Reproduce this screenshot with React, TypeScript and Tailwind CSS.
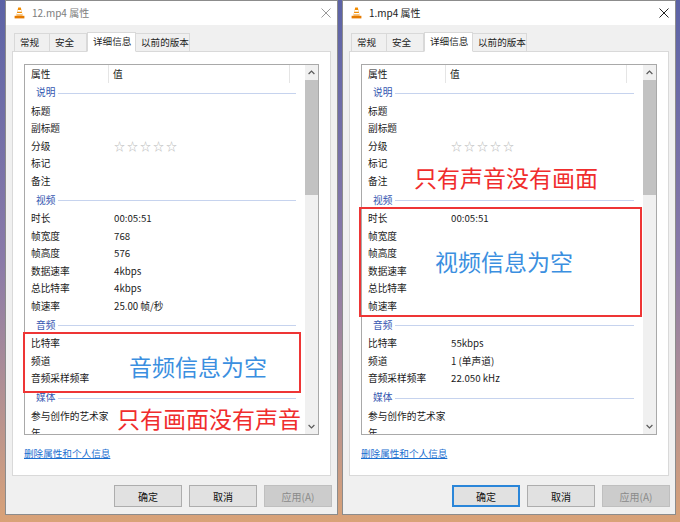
import React from 'react';

type Row = { label: string; value?: string; stars?: boolean };
type Group = { name: string; rows: Row[] };

const descGroup: Group = {
  name: '说明',
  rows: [
    { label: '标题' },
    { label: '副标题' },
    { label: '分级', stars: true },
    { label: '标记' },
    { label: '备注' },
  ],
};

const mediaGroup: Group = {
  name: '媒体',
  rows: [{ label: '参与创作的艺术家' }, { label: '年' }],
};

const leftGroups: Group[] = [
  descGroup,
  {
    name: '视频',
    rows: [
      { label: '时长', value: '00:05:51' },
      { label: '帧宽度', value: '768' },
      { label: '帧高度', value: '576' },
      { label: '数据速率', value: '4kbps' },
      { label: '总比特率', value: '4kbps' },
      { label: '帧速率', value: '25.00 帧/秒' },
    ],
  },
  {
    name: '音频',
    rows: [{ label: '比特率' }, { label: '频道' }, { label: '音频采样频率' }],
  },
  mediaGroup,
];

const rightGroups: Group[] = [
  descGroup,
  {
    name: '视频',
    rows: [
      { label: '时长', value: '00:05:51' },
      { label: '帧宽度' },
      { label: '帧高度' },
      { label: '数据速率' },
      { label: '总比特率' },
      { label: '帧速率' },
    ],
  },
  {
    name: '音频',
    rows: [
      { label: '比特率', value: '55kbps' },
      { label: '频道', value: '1 (单声道)' },
      { label: '音频采样频率', value: '22.050 kHz' },
    ],
  },
  mediaGroup,
];

function VlcIcon() {
  return (
    <svg width="11" height="12" viewBox="0 0 11 12">
      <path d="M4.2 0.6 L6.8 0.6 L8.6 8.6 L2.4 8.6 Z" fill="#f28c00" />
      <path d="M3.7 3 L7.3 3 L7.7 4.8 L3.3 4.8 Z" fill="#ffffff" />
      <path d="M3 6 L8 6 L8.3 7.4 L2.7 7.4 Z" fill="#ffffff" />
      <path d="M0.6 8.8 H10.4 L10.4 11.4 H0.6 Z" fill="#e57a00" />
    </svg>
  );
}

function CloseX({ color }: { color: string }) {
  return (
    <svg width="10" height="10" viewBox="0 0 10 10">
      <path d="M0.5 0.5 L9.5 9.5 M9.5 0.5 L0.5 9.5" stroke={color} strokeWidth="1" />
    </svg>
  );
}

function Chevron({ down }: { down?: boolean }) {
  return (
    <svg width="7" height="5" viewBox="0 0 7 5">
      <path
        d={down ? 'M0.6 1 L3.5 3.9 L6.4 1' : 'M0.6 4 L3.5 1.1 L6.4 4'}
        stroke="#5a5a5a"
        strokeWidth="1.2"
        fill="none"
      />
    </svg>
  );
}

function ListBox({ groups }: { groups: Group[] }) {
  return (
    <div className="h-[371px] border border-[#a9a9a9] bg-white flex overflow-hidden">
      <div className="flex-1 flex flex-col overflow-hidden text-[9.7px] text-[#1a1a1a]">
        <div className="h-[18px] flex shrink-0">
          <div className="w-[84px] pl-[6px] border-r border-[#e5e5e5] h-full flex items-center">属性</div>
          <div className="w-[181px] pl-[4px] border-r border-[#e5e5e5] h-full flex items-center">值</div>
        </div>
        {groups.map((g) => (
          <React.Fragment key={g.name}>
            <div className="h-[20px] shrink-0 flex items-center pl-[11px] pr-[9px] gap-[3px]">
              <span className="text-[#3456b0] leading-none">{g.name}</span>
              <div className="flex-1 h-px bg-[#c6d3ee]" />
            </div>
            {g.rows.map((r) => (
              <div key={r.label} className="h-[17.5px] shrink-0 flex items-center">
                <div className="w-[89px] pl-[6px] shrink-0 leading-none whitespace-nowrap">{r.label}</div>
                {r.stars ? (
                  <span className="text-[#b8b8b8] text-[11px] tracking-[2px] leading-none">☆☆☆☆☆</span>
                ) : (
                  <span className="leading-none whitespace-nowrap">{r.value ?? ''}</span>
                )}
              </div>
            ))}
          </React.Fragment>
        ))}
      </div>
      <div className="w-[13px] bg-[#f0f0f0] flex flex-col shrink-0">
        <div className="h-[15px] flex items-center justify-center">
          <Chevron />
        </div>
        <div className="h-[115px] bg-[#c2c2c2]" />
        <div className="flex-1" />
        <div className="h-[15px] flex items-center justify-center">
          <Chevron down />
        </div>
      </div>
    </div>
  );
}

const tabs = [
  { name: '常规', w: 'w-[36px]' },
  { name: '安全', w: 'w-[38px]' },
  { name: '详细信息', w: 'w-[49px]' },
  { name: '以前的版本', w: 'w-[55px]' },
];

function Dialog({
  title,
  active,
  groups,
  width,
  children,
}: {
  title: string;
  active: boolean;
  groups: Group[];
  width: string;
  children?: React.ReactNode;
}) {
  return (
    <div className={`${width} h-[515px] bg-[#f0f0f0] border border-[#8c8c8c] flex flex-col relative shrink-0`}>
      <div className="h-[24px] bg-white flex items-center pl-[8px] pr-[6px] shrink-0">
        <VlcIcon />
        <span
          className={`ml-[7px] text-[10px] leading-none ${active ? 'text-[#1a1a1a]' : 'text-[#7c7c7c]'}`}
        >
          {title}
        </span>
        <div className="flex-1" />
        <CloseX color={active ? '#222222' : '#9a9a9a'} />
      </div>
      <div className="h-[26px] pl-[8px] flex items-end shrink-0 relative z-10">
        {tabs.map((t) => {
          const sel = t.name === '详细信息';
          return (
            <div
              key={t.name}
              className={`${t.w} pl-[5px] flex items-center text-[9.6px] leading-none text-[#1e1e1e] border border-[#d9d9d9] ${
                sel ? 'h-[20px] bg-white border-b-white -mb-px' : 'h-[18px] bg-[#f0f0f0] border-b-0 -ml-px first:ml-0'
              }`}
            >
              {t.name}
            </div>
          );
        })}
      </div>
      <div className="mx-[6px] h-[425px] bg-white border border-[#d9d9d9] px-[11px] pt-[12px] flex flex-col shrink-0">
        <ListBox groups={groups} />
        <div className="mt-[11px] text-[9.6px] leading-[14px] text-[#1a6fd0] underline">删除属性和个人信息</div>
      </div>
      <div className="mt-[9px] flex justify-end gap-[7px] pr-[5px]">
        <div
          className={`w-[68px] h-[22px] flex items-center justify-center text-[10px] text-[#111] bg-[#e1e1e1] ${
            active ? 'border-2 border-[#2b86d9]' : 'border border-[#adadad]'
          }`}
        >
          确定
        </div>
        <div className="w-[68px] h-[22px] flex items-center justify-center text-[10px] text-[#111] bg-[#e1e1e1] border border-[#adadad]">
          取消
        </div>
        <div className="w-[68px] h-[22px] flex items-center justify-center text-[10px] text-[#8a8a8a] bg-[#cccccc] border border-[#bfbfbf]">
          应用(A)
        </div>
      </div>
      {children}
    </div>
  );
}

export default function App() {
  return (
    <div className="w-[680px] h-[522px] overflow-hidden bg-linear-to-b from-[#5c63a6] via-[#8a7aa8] to-[#d9a277] font-['Noto_Sans_CJK_SC','Noto_Sans',sans-serif]">
      <div className="flex pl-[5px] gap-[4px]">
        <Dialog title="12.mp4 属性" active={false} groups={leftGroups} width="w-[333px]">
          <div className="absolute left-[17px] top-[331px] w-[278px] h-[61px] border-2 border-[#ee3535]" />
          <div className="absolute left-[123px] top-[354px] text-[23px] leading-none text-[#3b8fe0] whitespace-nowrap">
            音频信息为空
          </div>
          <div className="absolute left-[111px] top-[406px] text-[23px] leading-none text-[#f02d2d] whitespace-nowrap">
            只有画面没有声音
          </div>
        </Dialog>
        <Dialog title="1.mp4 属性" active={true} groups={rightGroups} width="w-[334px]">
          <div className="absolute left-[71px] top-[165px] text-[23px] leading-none text-[#f02d2d] whitespace-nowrap">
            只有声音没有画面
          </div>
          <div className="absolute left-[16px] top-[206px] w-[283px] h-[110px] border-2 border-[#ee3535]" />
          <div className="absolute left-[92px] top-[249px] text-[23px] leading-none text-[#3b8fe0] whitespace-nowrap">
            视频信息为空
          </div>
        </Dialog>
      </div>
    </div>
  );
}
